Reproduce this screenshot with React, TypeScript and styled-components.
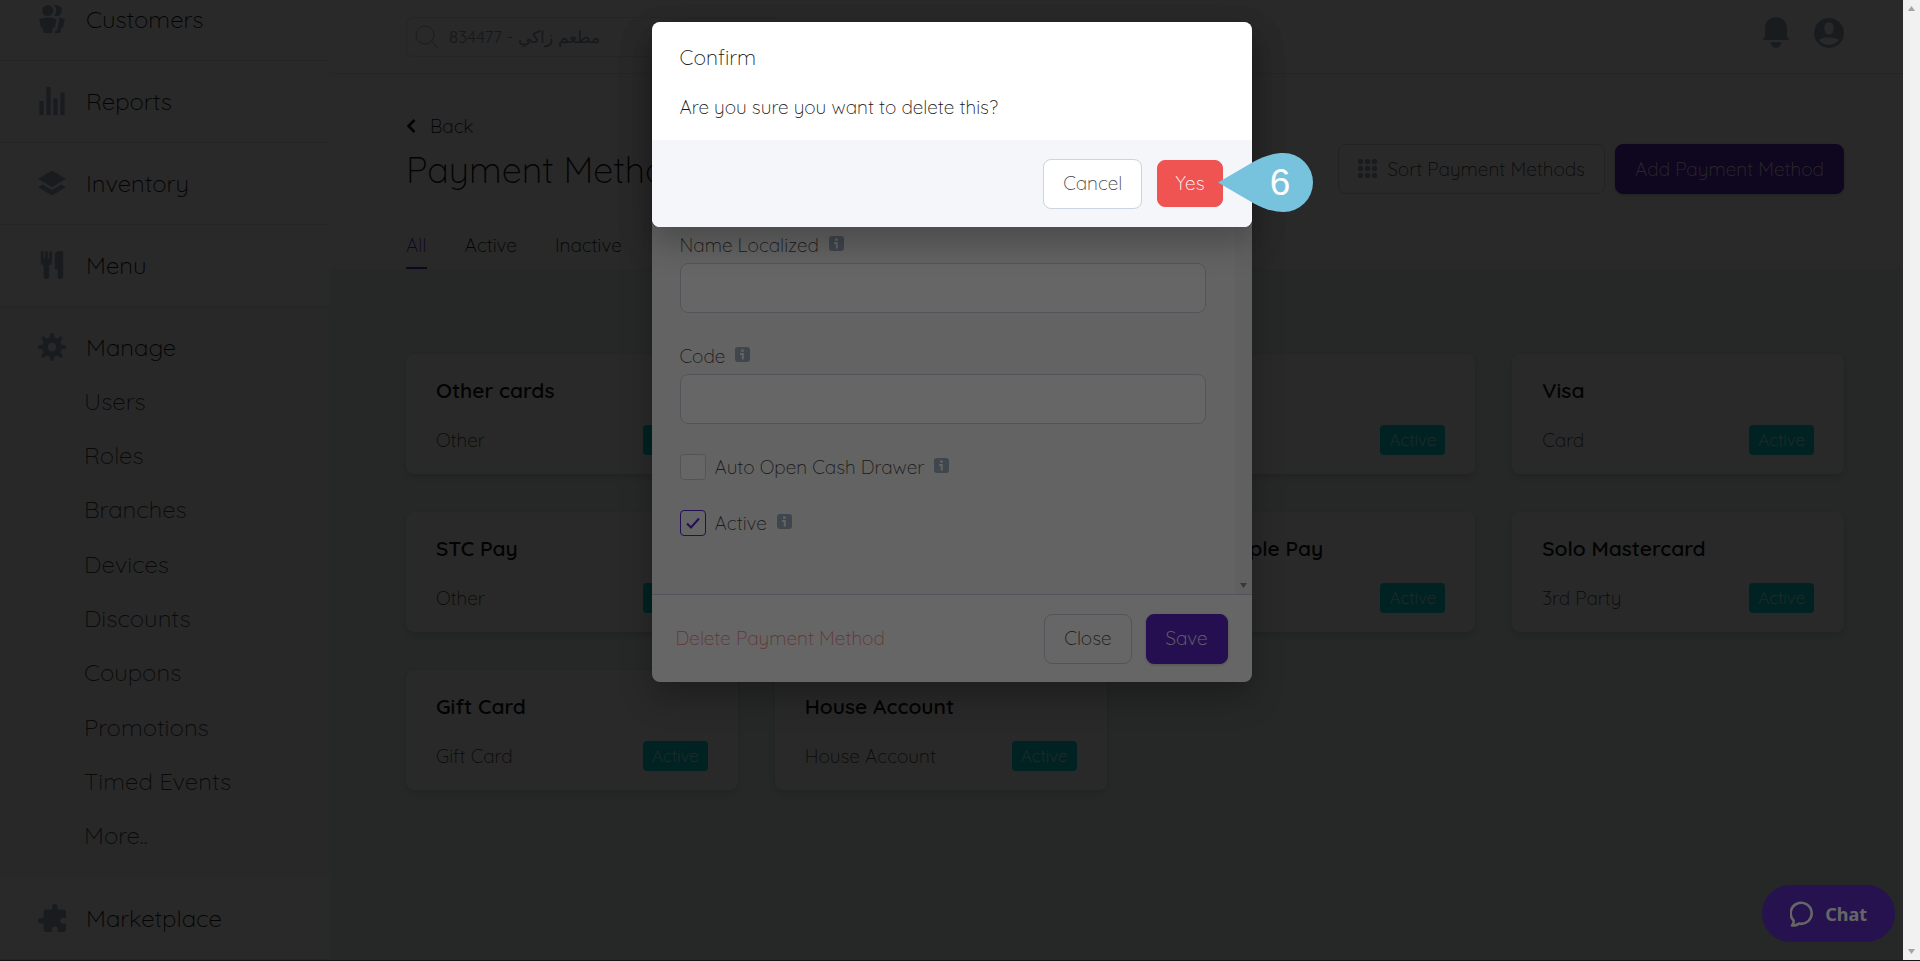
import React from "react";
import styled, { createGlobalStyle, css } from "styled-components";

const color = {
  ink: "#141414",
  body: "#444444",
  icon: "#a0aec0",
  line: "#e2e8f0",
  field: "#cbd5e0",
  canvas: "#eef8f5",
  purple: "#5f27c8",
  teal: "#00d8d8",
  red: "#ef5352",
  marker: "#77c2dc",
};

const GlobalStyle = createGlobalStyle`
  *, *::before, *::after { box-sizing: border-box; }
  body {
    margin: 0;
    font-family: Quicksand, Lato, "Noto Sans", sans-serif;
    font-size: 19px;
    font-weight: 360;
    line-height: 28px;
    color: ${color.ink};
  }
  button, input { font: inherit; color: inherit; }
  button { cursor: pointer; }
  a { color: inherit; text-decoration: none; }
  h1, h2, h3, p, ul { margin: 0; padding: 0; font-weight: inherit; }
  ul { list-style: none; }
  svg { display: block; flex: none; fill: currentColor; }
`;

const Shell = styled.div`
  display: flex;
  height: 100vh;
  border-bottom: 1px solid #1d0f16;
`;

const Stage = styled.div`
  position: relative;
  flex: 1;
  min-width: 0;
  display: flex;
  overflow: hidden;
  background: ${color.canvas};
`;

const Track = styled.div`
  width: 17px;
  padding: 6px 4px;
  display: flex;
  flex-direction: column;
  align-items: center;
  justify-content: space-between;
  background: #f1f1f1;
  color: #a3a3a3;
`;

/* Sidebar */
const Sidebar = styled.nav`
  width: 330px;
  flex: none;
  background: #fff;
  font-size: 24px;
  overflow: hidden;
`;

const SideList = styled.ul`
  margin-top: -21px;
`;

const SideLink = styled.a<{ $section?: boolean }>`
  display: flex;
  align-items: center;
  gap: 20px;
  height: ${(p) => (p.$section ? 54 : 82)}px;
  padding: 0 0 2px 38px;
  border-bottom: ${(p) => (p.$section ? "none" : `1px solid ${color.line}`)};
  svg {
    color: ${color.icon};
  }
`;

const SideSection = styled.li`
  padding: 14px 0;
  background: #fafcfc;
  box-shadow: inset 0 3px 4px rgba(0, 0, 0, 0.05);
`;

const SubList = styled.ul`
  display: grid;
  grid-auto-rows: 1fr;
  height: 489px;
  font-weight: 300;
  color: ${color.body};
`;

const SubLink = styled.a`
  display: flex;
  align-items: center;
  height: 100%;
  padding: 0 0 3px 84px;
`;

/* Main column */
const Main = styled.main`
  flex: 1;
  min-width: 0;
`;

const TopBar = styled.header`
  display: flex;
  align-items: center;
  justify-content: space-between;
  height: 74px;
  padding: 0 59px 0 76px;
  background: #fff;
  border-bottom: 1px solid ${color.line};
`;

const SearchBox = styled.label`
  display: flex;
  align-items: center;
  gap: 10px;
  width: 374px;
  height: 40px;
  padding: 0 8px;
  border: 1px solid ${color.line};
  border-radius: 8px;
  color: ${color.icon};
  input {
    flex: 1;
    min-width: 0;
    border: 0;
    padding: 0;
    outline: 0;
    background: transparent;
    font-size: 17px;
    font-weight: 400;
    color: #8f9bb0;
  }
`;

const TopIcons = styled.div`
  display: flex;
  align-items: center;
  gap: 25px;
  padding-bottom: 8px;
  color: ${color.icon};
`;

const IconButton = styled.button`
  border: 0;
  padding: 0;
  background: none;
  color: inherit;
`;

const PageHead = styled.section`
  display: flex;
  flex-direction: column;
  height: 195px;
  padding: 38px 59px 0 76px;
  background: #fff;
`;

const BackLink = styled.a`
  display: flex;
  align-items: center;
  gap: 14px;
`;

const HeadRow = styled.div`
  display: flex;
  justify-content: space-between;
  height: 60px;
`;

const Title = styled.h1`
  padding-top: 6px;
  font-size: 36px;
  line-height: 48px;
  font-weight: 300;
`;

const HeadActions = styled.div`
  display: flex;
  gap: 10px;
  padding-top: 4px;
`;

const Tabs = styled.div`
  display: flex;
  gap: 38px;
  margin-top: auto;
`;

const Tab = styled.button<{ $active?: boolean }>`
  height: 38px;
  border: 0;
  border-bottom: 2px solid ${(p) => (p.$active ? color.purple : "transparent")};
  padding: 0 0 10px;
  background: none;
  color: ${(p) => (p.$active ? color.purple : color.ink)};
`;

const Button = styled.button<{ $tone?: "plain" | "purple" | "red" }>`
  display: inline-flex;
  align-items: center;
  justify-content: center;
  gap: 10px;
  height: 50px;
  padding: 0 19px 1px;
  border: 1px solid ${color.field};
  border-radius: 8px;
  background: #fff;
  color: ${color.body};
  white-space: nowrap;
  svg {
    color: ${color.icon};
  }
  ${(p) =>
    p.$tone === "purple" &&
    css`
      border-color: ${color.purple};
      background: ${color.purple};
      color: #fff;
      box-shadow: 0 1px 3px rgba(0, 0, 0, 0.2);
    `}
  ${(p) =>
    p.$tone === "red" &&
    css`
      height: 47px;
      padding: 0 17px 1px;
      border-color: ${color.red};
      background: ${color.red};
      color: #fff;
    `}
`;

const CardGrid = styled.section`
  display: grid;
  grid-template-columns: repeat(4, 1fr);
  gap: 38px 37px;
  padding: 85px 59px 0 76px;
`;

const Card = styled.article`
  display: flex;
  flex-direction: column;
  justify-content: space-between;
  height: 120px;
  padding: 22px 30px 19px;
  border-radius: 8px;
  background: #fff;
  box-shadow: 0 4px 6px rgba(0, 0, 0, 0.1), 0 0 4px rgba(0, 0, 0, 0.05);
`;

const CardName = styled.h2`
  font-size: 21px;
  font-weight: 600;
`;

const CardFoot = styled.div`
  display: flex;
  align-items: center;
  justify-content: space-between;
  color: ${color.body};
`;

const Badge = styled.span`
  padding: 1px 9px;
  border-radius: 4px;
  background: ${color.teal};
  color: #fff;
  font-size: 17px;
`;

/* Dialogs */
const Overlay = styled.div`
  position: absolute;
  inset: 0;
  display: flex;
  align-items: flex-start;
  justify-content: center;
  padding-top: 22px;
  background: rgba(0, 0, 0, 0.6);
`;

const Dialog = styled.div`
  position: relative;
  width: 600px;
  border-radius: 8px;
  background: #fff;
  box-shadow: 0 16px 32px rgba(0, 0, 0, 0.25);
`;

const FormDialog = styled(Dialog)`
  display: flex;
  flex-direction: column;
  height: 660px;
  overflow: hidden;
`;

const FormScroll = styled.div`
  flex: 1;
  display: flex;
  background: #f7f7f7;
`;

const Form = styled.form`
  flex: 1;
  display: flex;
  flex-direction: column;
  justify-content: flex-end;
  padding: 0 29px 57px 28px;
`;

const FormTrack = styled.div`
  display: flex;
  align-items: flex-end;
  justify-content: center;
  width: 17px;
  padding-bottom: 6px;
  background: #f1f1f1;
  color: #8c8c8c;
`;

const Field = styled.div`
  display: flex;
  flex-direction: column;
  gap: 4px;
  margin-bottom: 29px;
  input {
    height: 50px;
    padding: 0 16px;
    border: 1px solid ${color.field};
    border-radius: 8px;
    background: #fff;
  }
  &:last-of-type {
    margin-bottom: 28px;
  }
`;

const LabelRow = styled.div`
  display: flex;
  align-items: center;
  gap: 10px;
  color: ${color.body};
  svg {
    margin-bottom: 4px;
    color: ${color.icon};
  }
`;

const CheckRow = styled.div`
  display: flex;
  align-items: center;
  gap: 9px;
  height: 28px;
  & + & {
    margin-top: 28px;
  }
`;

const Tick = styled.input`
  appearance: none;
  width: 26px;
  height: 26px;
  margin: 0;
  border: 1px solid ${color.field};
  border-radius: 4px;
  background: #fff;
  &:checked {
    border-color: ${color.purple};
    background: #fff
      url("data:image/svg+xml,%3Csvg xmlns='http://www.w3.org/2000/svg' viewBox='0 0 24 24'%3E%3Cpath d='M6 12.5l4 4 8-9' fill='none' stroke='%235f27c8' stroke-width='2'/%3E%3C/svg%3E")
      center / 24px no-repeat;
  }
`;

const FormFoot = styled.footer`
  display: flex;
  align-items: center;
  gap: 14px;
  height: 88px;
  padding: 0 24px;
  border-top: 1px solid ${color.field};
`;

const DeleteButton = styled.button`
  margin-right: auto;
  border: 0;
  padding: 0 0 2px;
  background: none;
  color: ${color.red};
  opacity: 0.7;
`;

const ConfirmText = styled.div`
  display: flex;
  flex-direction: column;
  gap: 22px;
  height: 118px;
  padding: 21px 28px 0;
`;

const ConfirmTitle = styled.h2`
  font-size: 21px;
  line-height: 28px;
`;

const ConfirmFoot = styled.footer`
  display: flex;
  align-items: center;
  justify-content: flex-end;
  gap: 15px;
  height: 87px;
  padding: 0 29px 0 28px;
  border-radius: 0 0 8px 8px;
  background: #f4f6fa;
`;

const Marker = styled.div`
  position: absolute;
  left: 566px;
  top: 131px;
  width: 95px;
  height: 59px;
  svg {
    position: absolute;
    inset: 0;
    color: ${color.marker};
  }
  span {
    position: absolute;
    inset: 0;
    padding-left: 30px;
    font-family: "Liberation Sans", Arial, sans-serif;
    font-size: 37px;
    font-weight: 400;
    line-height: 59px;
    text-align: center;
    color: #fff;
  }
`;

const ChatButton = styled.button`
  position: absolute;
  right: 8px;
  bottom: 18px;
  display: flex;
  align-items: center;
  gap: 11px;
  height: 57px;
  padding: 0 28px;
  border: 0;
  border-radius: 29px;
  background: #5c2ec6;
  color: #fff;
  font-family: "Noto Sans", sans-serif;
  font-size: 18px;
  font-weight: 700;
`;

/* Icons, drawn on a 20 unit grid */
const icons = {
  customers:
    "M7 8a4 4 0 1 1 0-8 4 4 0 0 1 0 8zm0 1c2.15 0 4.2.4 6.1 1.09L12 16h-1.25L10 20H4l-.75-4H2L.9 10.09A17.93 17.93 0 0 1 7 9zm8.31.17c1.32.18 2.59.48 3.8.92L18 16h-1.25L16 20h-3.96l.37-2h1.25l1.65-8.83zM13 0a4 4 0 1 1-1.33 7.76 5.96 5.96 0 0 0 0-7.52C12.1.1 12.53 0 13 0z",
  reports: "M1 10h3v10H1V10zM6 0h3v20H6V0zm5 8h3v12h-3V8zm5-4h3v16h-3V4z",
  inventory: "M10 1l10 6-10 6L0 7l10-6zm6.67 10L20 13l-10 6-10-6 3.33-2L10 15l6.67-4z",
  menu: "M18 11v7a2 2 0 0 1-4 0v-5h-2V3a3 3 0 0 1 3-3h3v11zM4 10a2 2 0 0 1-2-2V1a1 1 0 0 1 2 0v4h1V1a1 1 0 0 1 2 0v4h1V1a1 1 0 0 1 2 0v7a2 2 0 0 1-2 2v8a2 2 0 0 1-4 0v-8z",
  manage:
    "M3.94 6.5L2.22 3.64l1.42-1.42L6.5 3.94c.52-.3 1.1-.54 1.7-.7L9 0h2l.8 3.24c.6.16 1.18.4 1.7.7l2.86-1.72 1.42 1.42-1.72 2.86c.3.52.54 1.1.7 1.7L20 9v2l-3.24.8c-.16.6-.4 1.18-.7 1.7l1.72 2.86-1.42 1.42-2.86-1.72c-.52.3-1.1.54-1.7.7L11 20H9l-.8-3.24c-.6-.16-1.18-.4-1.7-.7l-2.86 1.72-1.42-1.42 1.72-2.86c-.3-.52-.54-1.1-.7-1.7L0 11V9l3.24-.8c.16-.6.4-1.18.7-1.7zM10 13a3 3 0 1 0 0-6 3 3 0 0 0 0 6z",
  marketplace:
    "M4 6a2 2 0 0 1 2-2h4V2a2 2 0 1 1 4 0v2h4a2 2 0 0 1 2 2v4h-2a2 2 0 1 0 0 4h2v4a2 2 0 0 1-2 2h-4v-2a2 2 0 1 0-4 0v2H6a2 2 0 0 1-2-2v-4H2a2 2 0 1 1 0-4h2z",
  user: "M10 20a10 10 0 1 1 0-20 10 10 0 0 1 0 20zM7 6v2a3 3 0 1 0 6 0V6a3 3 0 1 0-6 0zm-3.65 8.44a8 8 0 0 0 13.3 0 15.94 15.94 0 0 0-13.3 0z",
};

function Icon({ name, size = 28 }: { name: keyof typeof icons; size?: number }) {
  return (
    <svg width={size} height={size} viewBox="0 0 20 20" aria-hidden="true">
      <path d={icons[name]} />
    </svg>
  );
}

function Arrow({ down }: { down?: boolean }) {
  return (
    <svg width="7" height="5" viewBox="0 0 7 5" aria-hidden="true">
      <path d={down ? "M0 0h7L3.500 5z" : "M0 5h7L3.500 0z"} />
    </svg>
  );
}

function Info() {
  return (
    <svg width="15" height="15" viewBox="0 0 15 15" aria-hidden="true">
      <rect width="15" height="15" rx="3" />
      <path d="M6 2.500h2.800v2.200H6zM5 6h3.800v6.500H6.800V8H5z" fill="#f7f7f7" />
    </svg>
  );
}

const manageItems = ["Users", "Roles", "Branches", "Devices", "Discounts", "Coupons", "Promotions", "Timed Events", "More.."];

const methods = [
  { id: 1, name: "Other cards", type: "Other" },
  { id: 2, name: "", type: "" },
  { id: 3, name: "", type: "" },
  { id: 4, name: "Visa", type: "Card" },
  { id: 5, name: "STC Pay", type: "Other" },
  { id: 6, name: "", type: "" },
  { id: 7, name: "Solo Apple Pay", type: "" },
  { id: 8, name: "Solo Mastercard", type: "3rd Party" },
  { id: 9, name: "Gift Card", type: "Gift Card" },
  { id: 10, name: "House Account", type: "House Account" },
];

function SideItem({ name, label }: { name: keyof typeof icons; label: string }) {
  return (
    <li>
      <SideLink href="#">
        <Icon name={name} />
        {label}
      </SideLink>
    </li>
  );
}

export default function App() {
  return (
    <>
      <GlobalStyle />
      <Shell>
        <Stage>
          <Sidebar>
            <SideList>
              <SideItem name="customers" label="Customers" />
              <SideItem name="reports" label="Reports" />
              <SideItem name="inventory" label="Inventory" />
              <SideItem name="menu" label="Menu" />
              <SideSection>
                <SideLink href="#" $section>
                  <Icon name="manage" />
                  Manage
                </SideLink>
                <SubList>
                  {manageItems.map((item) => (
                    <li key={item}>
                      <SubLink href="#">{item}</SubLink>
                    </li>
                  ))}
                </SubList>
              </SideSection>
              <SideItem name="marketplace" label="Marketplace" />
            </SideList>
          </Sidebar>

          <Main>
            <TopBar>
              <SearchBox>
                <svg width="24" height="24" viewBox="0 0 24 24" aria-hidden="true">
                  <g fill="none" stroke="currentColor" strokeWidth="1">
                    <circle cx="10" cy="10" r="9" />
                    <path d="M16.500 16.500L23 23.500" />
                  </g>
                </svg>
                <input aria-label="Search" defaultValue="834477 - مطعم زاكي" />
              </SearchBox>
              <TopIcons>
                <IconButton aria-label="Notifications">
                  <svg width="26" height="31" viewBox="0 0 26 31" aria-hidden="true">
                    <path d="M13 0C19 0 24 4.500 24 11v8c0 1.500 2 2 2 3.500V23H0v-.5C0 21 2 20.500 2 19v-8C2 4.500 7 0 13 0zM7.500 25h11a5.500 6 0 0 1-11 0z" />
                  </svg>
                </IconButton>
                <IconButton aria-label="Account">
                  <Icon name="user" size={30} />
                </IconButton>
              </TopIcons>
            </TopBar>

            <PageHead>
              <BackLink href="#">
                <svg width="10" height="14" viewBox="0 0 10 14" aria-hidden="true">
                  <path d="M8.500 1L2.500 7l6 6" fill="none" stroke="currentColor" strokeWidth="2.500" />
                </svg>
                Back
              </BackLink>
              <HeadRow>
                <Title>Payment Methods</Title>
                <HeadActions>
                  <Button>
                    <svg width="19" height="19" viewBox="0 0 19 19" aria-hidden="true">
                      {[2.5, 9.5, 16.5].map((y) => [2.5, 9.5, 16.5].map((x) => <circle key={`${x}-${y}`} cx={x} cy={y} r="2.700" />))}
                    </svg>
                    Sort Payment Methods
                  </Button>
                  <Button $tone="purple">Add Payment Method</Button>
                </HeadActions>
              </HeadRow>
              <Tabs>
                <Tab $active>All</Tab>
                <Tab>Active</Tab>
                <Tab>Inactive</Tab>
              </Tabs>
            </PageHead>

            <CardGrid>
              {methods.map((method) => (
                <Card key={method.id}>
                  <CardName>{method.name}</CardName>
                  <CardFoot>
                    <span>{method.type}</span>
                    <Badge>Active</Badge>
                  </CardFoot>
                </Card>
              ))}
            </CardGrid>
          </Main>

          <Overlay>
            <FormDialog>
              <FormScroll>
                <Form>
                  <Field>
                    <LabelRow>
                      <label htmlFor="name-localized">Name Localized</label>
                      <Info />
                    </LabelRow>
                    <input id="name-localized" type="text" />
                  </Field>
                  <Field>
                    <LabelRow>
                      <label htmlFor="code">Code</label>
                      <Info />
                    </LabelRow>
                    <input id="code" type="text" />
                  </Field>
                  <CheckRow>
                    <Tick type="checkbox" id="auto-open" />
                    <LabelRow>
                      <label htmlFor="auto-open">Auto Open Cash Drawer</label>
                      <Info />
                    </LabelRow>
                  </CheckRow>
                  <CheckRow>
                    <Tick type="checkbox" id="active" defaultChecked />
                    <LabelRow>
                      <label htmlFor="active">Active</label>
                      <Info />
                    </LabelRow>
                  </CheckRow>
                </Form>
                <FormTrack>
                  <Arrow down />
                </FormTrack>
              </FormScroll>
              <FormFoot>
                <DeleteButton>Delete Payment Method</DeleteButton>
                <Button>Close</Button>
                <Button $tone="purple">Save</Button>
              </FormFoot>
            </FormDialog>
          </Overlay>

          <ChatButton>
            <svg width="24" height="26" viewBox="0 0 24 26" aria-hidden="true">
              <path
                d="M2 24.500c1.500-1.500 2-3 1.500-5A10.500 10.500 0 1 1 9 22.600C7 24 4.500 24.800 2 24.500z"
                fill="none"
                stroke="currentColor"
                strokeWidth="2.600"
                strokeLinejoin="round"
              />
            </svg>
            Chat
          </ChatButton>

          <Overlay>
            <Dialog role="dialog" aria-labelledby="confirm-title">
              <ConfirmText>
                <ConfirmTitle id="confirm-title">Confirm</ConfirmTitle>
                <p>Are you sure you want to delete this?</p>
              </ConfirmText>
              <ConfirmFoot>
                <Button>Cancel</Button>
                <Button $tone="red">Yes</Button>
              </ConfirmFoot>
              <Marker>
                <svg width="95" height="59" viewBox="0 0 95 59" aria-hidden="true">
                  <path d="M0 29.500L36 8.500C46 3 56 0 65.500 0a29.500 29.500 0 0 1 0 59C56 59 46 56 36 50.500z" />
                </svg>
                <span>6</span>
              </Marker>
            </Dialog>
          </Overlay>
        </Stage>
        <Track>
          <Arrow />
          <Arrow down />
        </Track>
      </Shell>
    </>
  );
}
